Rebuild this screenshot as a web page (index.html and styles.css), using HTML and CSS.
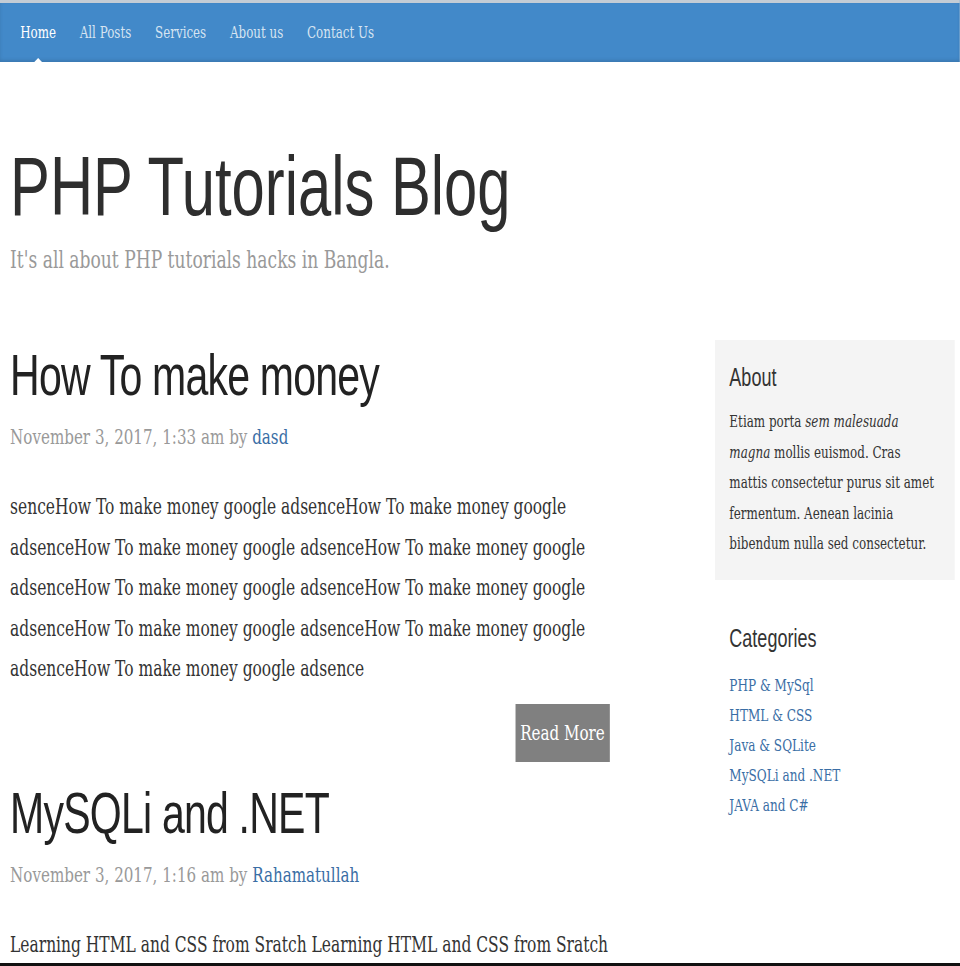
FILE: index.html
```html
<!DOCTYPE html>
<html lang="en">
<head>
<meta charset="utf-8">
<title>PHP Tutorials Blog</title>
<link rel="stylesheet" href="styles.css">
</head>
<body>
<div class="viewport">
<div class="page">
  <header class="masthead">
    <nav class="nav">
      <a class="nav-item active" href="#">Home</a>
      <a class="nav-item" href="#">All Posts</a>
      <a class="nav-item" href="#">Services</a>
      <a class="nav-item" href="#">About us</a>
      <a class="nav-item" href="#">Contact Us</a>
    </nav>
  </header>

  <div class="container">
    <div class="blog-header">
      <h1 class="blog-title">PHP Tutorials Blog</h1>
      <p class="blog-description">It's all about PHP tutorials hacks in Bangla.</p>
    </div>

    <div class="row">
      <main class="main">
        <article class="post">
          <h2 class="post-title">How To make money</h2>
          <p class="post-meta">November 3, 2017, 1:33 am by <a href="#">dasd</a></p>
          <p class="post-body">senceHow To make money google adsenceHow To make money google adsenceHow To make money google adsenceHow To make money google adsenceHow To make money google adsenceHow To make money google adsenceHow To make money google adsenceHow To make money google adsenceHow To make money google adsence</p>
          <div class="more"><a class="btn" href="#">Read More</a></div>
        </article>

        <article class="post">
          <h2 class="post-title">MySQLi and .NET</h2>
          <p class="post-meta">November 3, 2017, 1:16 am by <a href="#">Rahamatullah</a></p>
          <p class="post-body">Learning HTML and CSS from Sratch Learning HTML and CSS from Sratch</p>
        </article>
      </main>

      <aside class="sidebar">
        <div class="module module-inset">
          <h4 class="module-title">About</h4>
          <p class="module-text">Etiam porta <em>sem malesuada magna</em> mollis euismod. Cras mattis consectetur purus sit amet fermentum. Aenean lacinia bibendum nulla sed consectetur.</p>
        </div>
        <div class="module module-plain">
          <h4 class="module-title">Categories</h4>
          <ul class="cat-list">
            <li><a href="#">PHP &amp; MySql</a></li>
            <li><a href="#">HTML &amp; CSS</a></li>
            <li><a href="#">Java &amp; SQLite</a></li>
            <li><a href="#">MySQLi and .NET</a></li>
            <li><a href="#">JAVA and C#</a></li>
          </ul>
        </div>
      </aside>
    </div>
  </div>
</div>
</div>
<div class="taskbar"></div>
</body>
</html>
```

FILE: styles.css
```css
html, body {
  margin: 0;
  padding: 0;
  height: 100%;
  overflow: hidden;
  background: #fff;
}

.viewport {
  width: 960px;
  height: 966px;
  overflow: hidden;
}

.page {
  width: 1333px;
  transform: scaleX(0.72);
  transform-origin: 0 0;
  font-family: "DejaVu Serif", "Liberation Serif", serif;
  color: #333;
}

a {
  color: #3a6ea5;
  text-decoration: none;
}

/* Masthead */
.masthead {
  border-top: 3px solid #c3ccd5;
  background: #4289c9;
  height: 59px;
  box-shadow: inset 0 -2px 4px rgba(0, 0, 0, 0.12);
}

.nav {
  display: flex;
  gap: 33px;
  padding-left: 28px;
  height: 59px;
  align-items: center;
}

.nav-item {
  position: relative;
  color: #d6e4f1;
  font-size: 16.5px;
  line-height: 60px;
}

.nav-item.active {
  color: #fff;
}

.nav-item.active::after {
  content: "";
  position: absolute;
  left: 50%;
  bottom: -1px;
  margin-left: -8px;
  border-left: 8px solid transparent;
  border-right: 8px solid transparent;
  border-bottom: 6px solid #fff;
}

/* Container */
.container {
  padding-left: 14px;
}

.blog-header {
  padding-top: 83px;
}

.blog-title {
  margin: 0;
  font-family: "Liberation Sans", Arial, sans-serif;
  font-weight: normal;
  font-size: 83px;
  line-height: 83px;
  color: #2e2e2e;
}

.blog-description {
  margin: 17px 0 0;
  font-size: 23.8px;
  line-height: 30px;
  color: #999;
}

.row {
  display: flex;
  gap: 146px;
  margin-top: 65px;
}

.main {
  width: 833px;
}

.post-title {
  margin: 7px 0 0;
  font-family: "Liberation Sans", Arial, sans-serif;
  font-weight: normal;
  font-size: 57px;
  line-height: 57px;
  letter-spacing: -1.1px;
  color: #222;
}

.post + .post .post-title {
  margin-top: 23px;
}

.post-meta {
  margin: 18px 0 0;
  font-size: 21px;
  line-height: 30px;
  color: #999;
}

.post-body {
  margin: 35px 0 0;
  font-size: 21.5px;
  line-height: 40.5px;
  color: #333;
}

.more {
  display: flex;
  justify-content: flex-end;
  margin-top: 14px;
}

.btn {
  display: block;
  background: #808080;
  color: #fff;
  font-size: 21px;
  line-height: 30px;
  padding: 14px 7px;
}

/* Sidebar */
.sidebar {
  width: 333px;
}

.module {
  padding: 0 20px;
}

.module-inset {
  background: #f4f4f4;
  padding-top: 24px;
  padding-bottom: 20px;
}

.module-plain {
  margin-top: 45px;
}

.module-title {
  margin: 0;
  font-family: "Liberation Sans", Arial, sans-serif;
  font-weight: normal;
  font-size: 25px;
  line-height: 27px;
  color: #333;
}

.module-text {
  margin: 16px 0 0;
  font-size: 16.6px;
  line-height: 30.5px;
  color: #333;
}

.cat-list {
  list-style: none;
  margin: 18px 0 0;
  padding: 0;
  font-size: 16.8px;
  line-height: 30px;
}

.taskbar {
  position: fixed;
  left: 0;
  right: 0;
  bottom: 0;
  height: 3px;
  background: #111;
}
```
